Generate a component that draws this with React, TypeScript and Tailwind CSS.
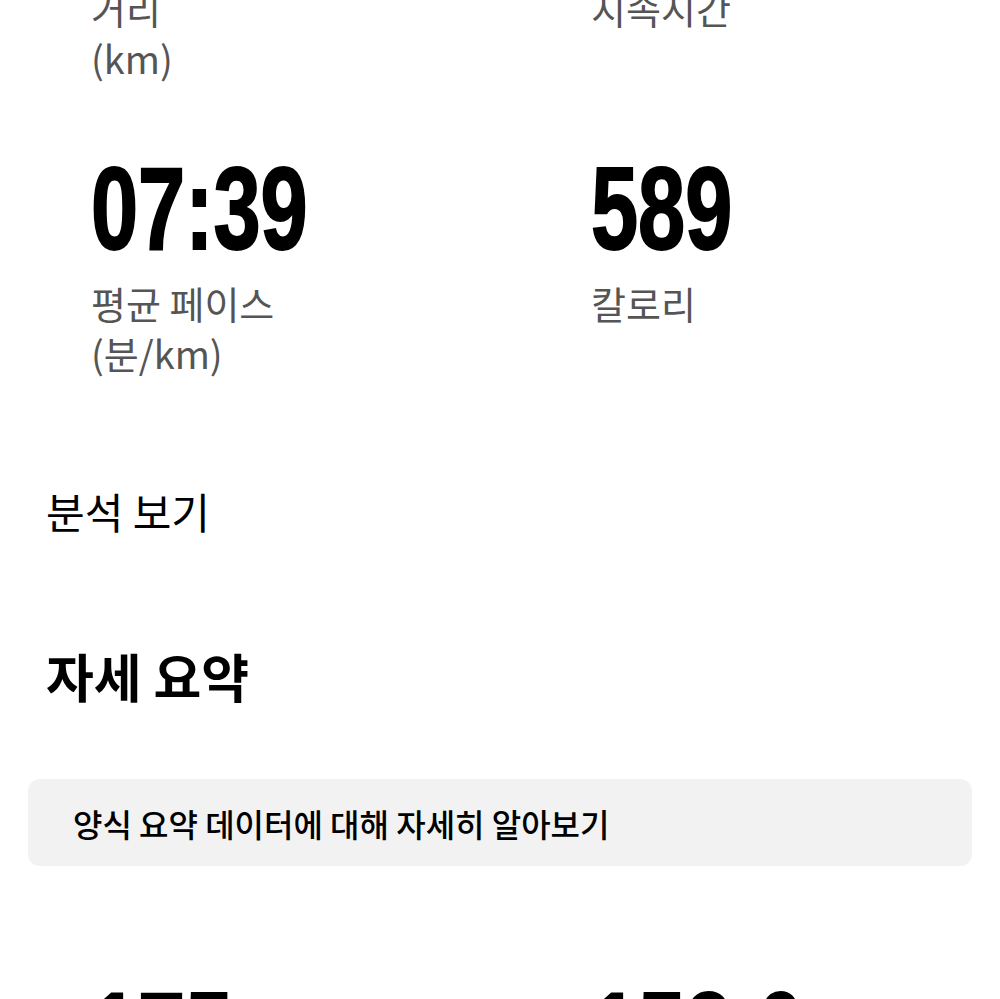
const numberFont = "font-['Liberation_Sans','Arial',sans-serif]"

type Stat = { value?: string; label: string[] }

function StatCell({ value, label }: Stat) {
  return (
    <div className="flex flex-col items-start">
      {value ? (
        <span
          className={`${numberFont} inline-block origin-left scale-x-[0.73] text-[116px] font-bold leading-none text-black [-webkit-text-stroke:2px_black]`}
        >
          {value}
        </span>
      ) : null}
      {label.length ? (
        <div className={value ? "mt-[11px]" : ""}>
          {label.map((line) => (
            <p key={line} className="text-[38px] leading-[50px] text-[#555555]">
              {line}
            </p>
          ))}
        </div>
      ) : null}
    </div>
  )
}

function StatRow({ items, className }: { items: Stat[]; className?: string }) {
  return (
    <section className={`grid grid-cols-[500px_1fr] pl-[91px] ${className ?? ""}`}>
      {items.map((item, i) => (
        <StatCell key={i} {...item} />
      ))}
    </section>
  )
}

export default function App() {
  return (
    <div className="min-h-screen overflow-hidden bg-white font-['Noto_Sans_CJK_KR','Noto_Sans',sans-serif]">
      <StatRow
        className="-mt-[17px]"
        items={[{ label: ["거리", "(km)"] }, { label: ["지속시간"] }]}
      />
      <StatRow
        className="mt-[68px]"
        items={[
          { value: "07:39", label: ["평균 페이스", "(분/km)"] },
          { value: "589", label: ["칼로리"] },
        ]}
      />

      <div className="px-[46px]">
        <p className="mt-[104px] text-[42px] leading-[57px] text-black">분석 보기</p>
        <h2 className="mt-[106px] text-[52px] font-bold leading-[62px] text-black">
          자세 요약
        </h2>
      </div>

      <div className="mx-[28px] mt-[72px] flex h-[87px] items-center rounded-xl bg-[#f2f2f2] px-[45px]">
        <p className="text-[32px] font-medium text-black">
          양식 요약 데이터에 대해 자세히 알아보기
        </p>
      </div>

      <StatRow
        className="mt-[110px]"
        items={[
          { value: "175", label: ["평균 케이던스"] },
          { value: "153.6", label: ["평균 보폭"] },
        ]}
      />
    </div>
  )
}
